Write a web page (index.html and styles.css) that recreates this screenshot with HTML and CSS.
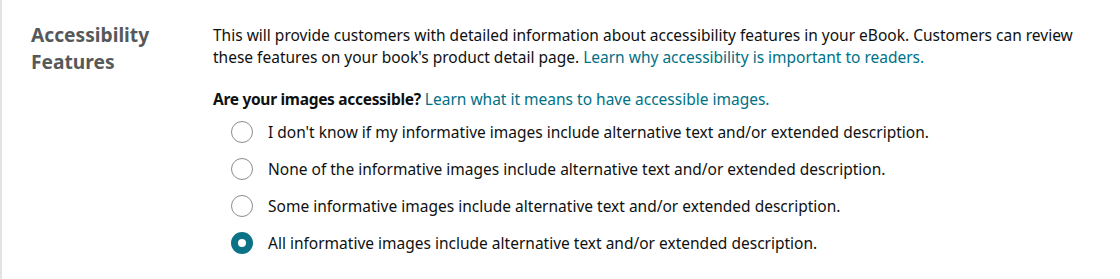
FILE: index.html
```html
<!DOCTYPE html>
<html lang="en">
<head>
<meta charset="utf-8">
<title>Accessibility Features</title>
<link rel="stylesheet" href="styles.css">
</head>
<body>
<section class="section">
  <h2 class="section-title">Accessibility<br>Features</h2>
  <div class="section-body">
    <p class="intro">This will provide customers with detailed information about accessibility features in your eBook. Customers can review these features on your book's product detail page. <a href="#" class="link">Learn why accessibility is important to readers.</a></p>
    <p class="question"><strong>Are your images accessible?</strong> <a href="#" class="link">Learn what it means to have accessible images.</a></p>
    <div class="options">
      <label class="option"><span class="radio"></span><span>I don't know if my informative images include alternative text and/or extended description.</span></label>
      <label class="option"><span class="radio"></span><span>None of the informative images include alternative text and/or extended description.</span></label>
      <label class="option"><span class="radio"></span><span>Some informative images include alternative text and/or extended description.</span></label>
      <label class="option"><span class="radio checked"></span><span>All informative images include alternative text and/or extended description.</span></label>
    </div>
  </div>
</section>
</body>
</html>
```
FILE: styles.css
```css
html, body {
  margin: 0;
  padding: 0;
  background: #fff;
}
body {
  font-family: "Noto Sans", "Open Sans", sans-serif;
  color: #0f1111;
  font-size: 15.5px;
}
.section {
  display: grid;
  grid-template-columns: 211px 1fr;
  border-left: 2px solid #e3e3e3;
  min-height: 279px;
  box-sizing: border-box;
}
.section-title {
  margin: 21px 0 0 29px;
  font-size: 19.2px;
  line-height: 27px;
  font-weight: 700;
  color: #565959;
}
.section-body {
  padding-top: 24px;
}
.intro {
  margin: 0;
  line-height: 22px;
  max-width: 870px;
}
.link {
  color: #007185;
  text-decoration: none;
}
.question {
  margin: 20px 0 0;
  line-height: 22px;
}
.question strong {
  font-weight: 700;
  letter-spacing: -0.3px;
}
.options {
  display: flex;
  flex-direction: column;
  padding-top: 3px;
  padding-left: 18px;
}
.option {
  display: flex;
  align-items: center;
  gap: 15px;
  height: 37px;
}
.radio {
  width: 22px;
  height: 22px;
  box-sizing: border-box;
  border: 1px solid #8c8c8c;
  border-radius: 50%;
  flex: none;
  background: #fff;
}
.radio.checked {
  border: 7px solid #0c7285;
  background: #fff;
}
```
